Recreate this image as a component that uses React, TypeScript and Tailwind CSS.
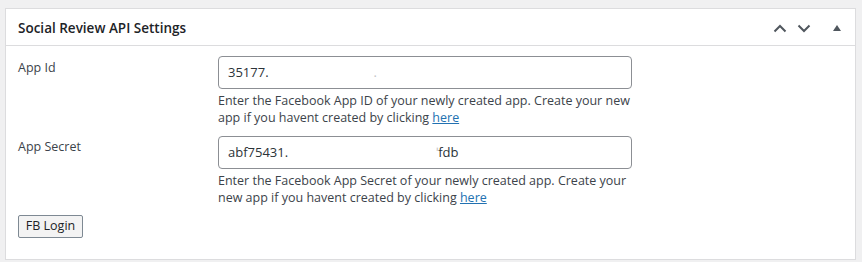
import React from "react";

function ChevronUp() {
  return (
    <svg width="14" height="9" viewBox="0 0 14 9" fill="none">
      <path d="M1.5 7.5 L7 2 L12.5 7.5" stroke="#50575e" strokeWidth="2" />
    </svg>
  );
}
function ChevronDown() {
  return (
    <svg width="14" height="9" viewBox="0 0 14 9" fill="none">
      <path d="M1.5 1.5 L7 7 L12.5 1.5" stroke="#50575e" strokeWidth="2" />
    </svg>
  );
}
function Triangle() {
  return (
    <svg width="8" height="6" viewBox="0 0 8 6">
      <path d="M0 6 L4 0 L8 6 Z" fill="#50575e" />
    </svg>
  );
}

export default function App() {
  const font = { fontFamily: '"Open Sans", "Noto Sans", sans-serif' };
  return (
    <div className="w-[862px] h-[262px] bg-[#f0f0f1] pt-[8px] pl-[5px] pr-[6px]" style={font}>
      <div className="h-[252px] bg-white border border-[#dcdcde] text-[#3c434a]">
        <div className="h-[37px] border-b border-[#dcdcde] flex items-center justify-between pl-[12px] pr-[14px]">
          <h2 className="text-[13.5px] font-semibold text-[#1d2327] pt-[2px]">Social Review API Settings</h2>
          <div className="flex items-center gap-[10px] pt-[2px]">
            <ChevronUp />
            <ChevronDown />
            <div className="ml-[12px] flex items-center"><Triangle /></div>
          </div>
        </div>
        <div className="pl-[12px] pt-[10px]">
          <div className="flex">
            <div className="w-[200px] text-[12.5px] pt-[3px]">App Id</div>
            <div className="w-[414px]">
              <div className="h-[33px] border border-[#8c8f94] rounded-[4px] flex items-center px-[9px] text-[13px] text-[#2c3338]">
                <span>35177.</span>
                <span className="ml-[105px] text-[#c3c4c7]">.</span>
              </div>
              <p className="text-[12.5px] leading-[17px] mt-[3px]">
                Enter the Facebook App ID of your newly created app. Create your new app if you havent created by clicking{" "}
                <a className="text-[#2271b1] underline">here</a>
              </p>
            </div>
          </div>
          <div className="flex mt-[10px]">
            <div className="w-[200px] text-[12.5px] pt-[2px]">App Secret</div>
            <div className="w-[414px]">
              <div className="h-[33px] border border-[#8c8f94] rounded-[4px] flex items-center px-[9px] text-[13px] text-[#2c3338]">
                <span>abf75431.</span>
                <span className="ml-[148px]"><span className="text-[#c3c4c7]">ˈ</span>fdb</span>
              </div>
              <p className="text-[12.5px] leading-[17px] mt-[3px] pr-[4px]">
                Enter the Facebook App Secret of your newly created app. Create your new app if you havent created by clicking{" "}
                <a className="text-[#2271b1] underline">here</a>
              </p>
            </div>
          </div>
          <button className="mt-[9px] h-[23px] w-[65px] border border-[#7e8993] bg-[#f3f3f3] rounded-[2px] text-[12.5px] text-[#1d2327] flex items-center justify-center">
            FB Login
          </button>
        </div>
      </div>
    </div>
  );
}
